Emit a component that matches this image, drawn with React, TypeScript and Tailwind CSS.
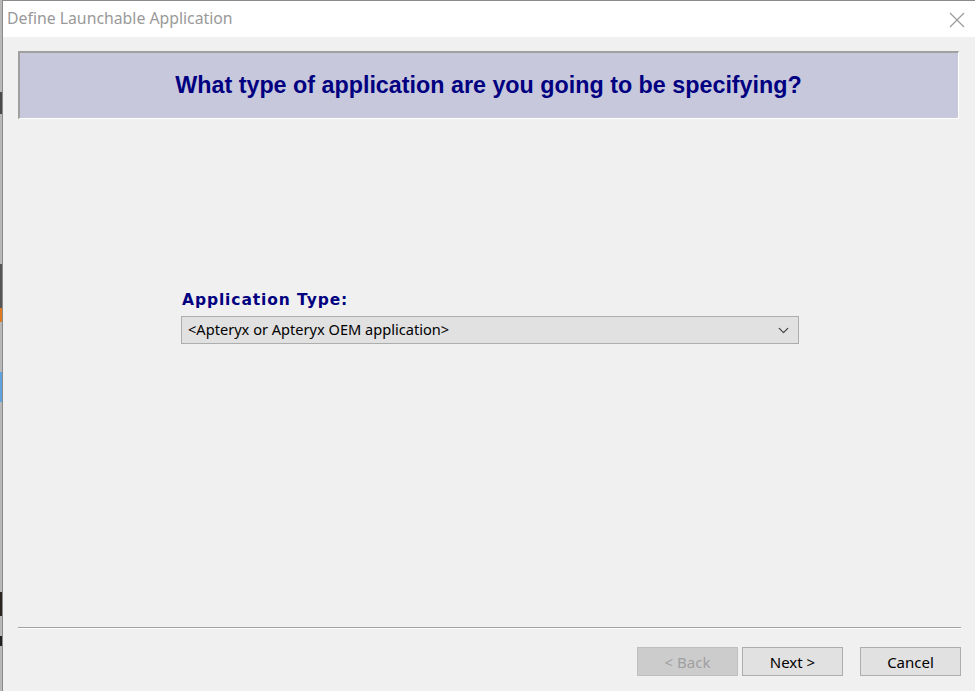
import { ChevronDown } from 'lucide-react'

const ui = "font-['Segoe_UI','Noto_Sans',sans-serif]"

function WizardButton({ label, disabled }: { label: string; disabled?: boolean }) {
  return (
    <button
      disabled={disabled}
      className={
        disabled
          ? `${ui} w-[101px] h-[29px] pt-[1px] border border-[#bfbfbf] bg-[#cccccc] text-[15px] text-[#a0a0a0]`
          : `${ui} w-[101px] h-[29px] pt-[1px] border border-[#adadad] bg-[#e1e1e1] text-[15px] text-black`
      }
    >
      {label}
    </button>
  )
}

export default function App() {
  return (
    <div className="w-[975px] h-[691px] flex bg-[#f0f0f0] overflow-hidden">
      {/* bit of desktop peeking out on the left */}
      <div className="w-[2px] flex flex-col bg-[#b8b8b8]">
        <div className="h-[92px]" />
        <div className="h-[22px] bg-[#4a4a4a]" />
        <div className="h-[150px]" />
        <div className="h-[44px] bg-[#555555]" />
        <div className="h-[14px] bg-[#e07a20]" />
        <div className="h-[50px]" />
        <div className="h-[30px] bg-[#5ea2e0]" />
        <div className="h-[190px]" />
        <div className="h-[24px] bg-[#2a2520]" />
        <div className="h-[20px]" />
        <div className="h-[10px] bg-[#222]" />
      </div>

      <div className="flex-1 flex flex-col border-l border-t border-[#8a8a8a]">
        {/* title bar */}
        <div className="h-[36px] bg-white flex items-center justify-between pl-[4px] pr-[6px]">
          <span className={`${ui} text-[15.8px] text-[#999999]`}>Define Launchable Application</span>
          <svg width="20" height="20" viewBox="0 0 20 20" className="mr-[2px] mt-[1px]">
            <path d="M3 3 L17 17 M17 3 L3 17" stroke="#9a9a9a" strokeWidth="1.2" fill="none" />
          </svg>
        </div>

        {/* content */}
        <div className="flex-1 flex flex-col px-[15px] pt-[14px]">
          <div className="h-[68px] mr-[1px] flex items-center justify-center bg-[#c8c8dc] border-t-2 border-l-2 border-t-[#a0a0a0] border-l-[#a0a0a0] border-b border-r border-b-white border-r-white">
            <h1 className="font-['Liberation_Sans',Arial,sans-serif] font-bold text-[23.3px] text-[#000080] pr-[1px]">
              What type of application are you going to be specifying?
            </h1>
          </div>

          <div className="flex-1 flex flex-col pl-[163px] pr-[160px] pt-[172px]">
            <label className="font-['DejaVu_Sans',Verdana,sans-serif] font-bold text-[15.5px] text-[#000080] leading-[19px] pl-[1px] tracking-[0.9px]">
              Application Type:
            </label>
            <div className="mt-[6px] h-[28px] w-[618px] flex items-center justify-between border border-[#adadad] bg-[#e1e1e1] pl-[6px] pr-[6px]">
              <span className={`${ui} text-[14.6px] text-black`}>&lt;Apteryx or Apteryx OEM application&gt;</span>
              <ChevronDown size={17} strokeWidth={1.8} color="#444" />
            </div>
          </div>

          {/* separator + buttons */}
          <div className="h-[2px] -mr-[1px] border-t border-[#a0a0a0] border-b border-b-white" />
          <div className="h-[62px] -mr-[1px] flex items-start justify-end pt-[18px] gap-[4px]">
            <WizardButton label="< Back" disabled />
            <WizardButton label="Next >" />
            <div className="w-[9px]" />
            <WizardButton label="Cancel" />
          </div>
        </div>
      </div>
    </div>
  )
}
